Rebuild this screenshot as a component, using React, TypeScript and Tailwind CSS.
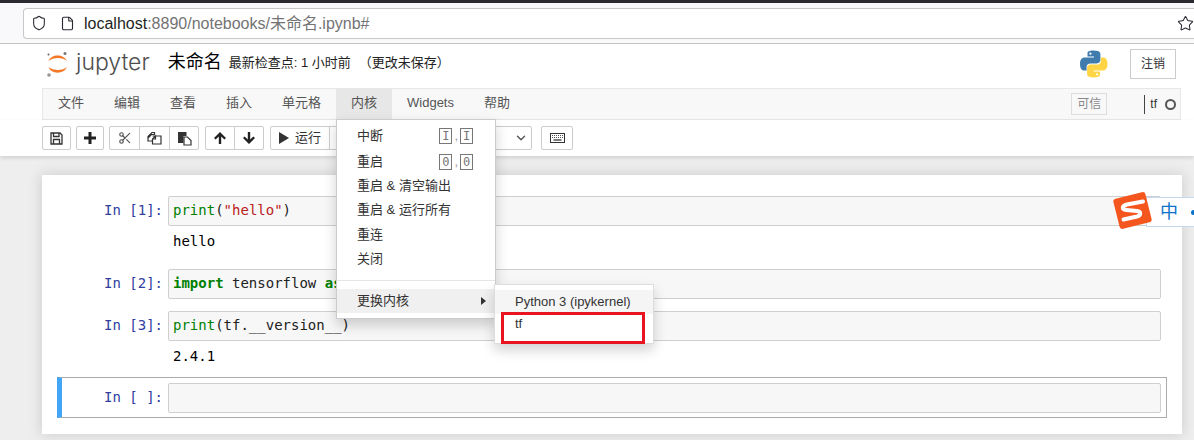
import React from 'react';
import { ChevronDown, Scissors, Shield, File, Star } from 'lucide-react';

const SANS = "font-['Liberation_Sans','Noto_Sans_CJK_SC',sans-serif]";
const MONO = "font-['DejaVu_Sans_Mono',monospace]";

const MENU_ITEMS = [
  { label: '文件', width: 'w-14' },
  { label: '编辑', width: 'w-14' },
  { label: '查看', width: 'w-14' },
  { label: '插入', width: 'w-14' },
  { label: '单元格', width: 'w-[69px]' },
  { label: '内核', width: 'w-[56px]', active: true },
  { label: 'Widgets', width: 'w-[77px]' },
  { label: '帮助', width: 'w-[56px]' },
];

const JupyterLogo = () => (
  <svg width="24" height="30" viewBox="0 0 24 30" className="shrink-0">
    <path d="M2.5 12 C5 4.5 18 4.5 21 12 C17 8 7 8 2.5 12Z" fill="#f37726" />
    <path d="M2.5 18 C5 25.5 18 25.5 21 18 C17 22 7 22 2.5 18Z" fill="#f37726" />
    <circle cx="19" cy="4.5" r="1.5" fill="#767677" />
    <circle cx="3" cy="26" r="1.8" fill="#989798" />
    <circle cx="2.5" cy="5.5" r="1" fill="#616262" />
  </svg>
);

const PythonLogo = () => (
  <svg width="30" height="30" viewBox="0 0 30 30">
    <path d="M14.5 1.5C8 1.5 8.5 4.2 8.5 4.2V7.5H15V8.6H5.5C5.5 8.6 1 8.2 1 15C1 21.8 5 21.4 5 21.4H7.6V18.2C7.6 18.2 7.4 14.4 11.4 14.4H17.6C17.6 14.4 21.4 14.5 21.4 10.8V5C21.4 5 22 1.5 14.5 1.5Z" fill="#3f7cad" />
    <circle cx="11.4" cy="4.7" r="1.1" fill="#fff" />
    <path d="M15 28.5C21.5 28.5 21 25.8 21 25.8V22.5H14.5V21.4H24C24 21.4 28.5 21.8 28.5 15C28.5 8.2 24.5 8.6 24.5 8.6H21.9V11.8C21.9 11.8 22.1 15.6 18.1 15.6H11.9C11.9 15.6 8.1 15.5 8.1 19.2V25C8.1 25 7.5 28.5 15 28.5Z" fill="#ffd545" />
    <circle cx="18.1" cy="25.3" r="1.1" fill="#fff" />
  </svg>
);

const SogouLogo = () => (
  <svg width="42" height="40" viewBox="0 0 42 40">
    <rect x="4" y="4" width="33" height="31" rx="3" transform="rotate(-14 20.5 19.5)" fill="#f4561d" />
    <path d="M31 10.5L15 13.5C9.5 15 9.5 18.5 14.5 19L25 20C29.5 20.5 29 24.5 25 25.5L11.5 28.5" fill="none" stroke="#fff" strokeWidth="4" strokeLinecap="round" />
  </svg>
);

const SaveIcon = () => (
  <svg width="13" height="13" viewBox="0 0 13 13" fill="none" stroke="#333" strokeWidth="1.3">
    <path d="M1 1H10L12 3V12H1Z" />
    <path d="M3.5 1V4.5H9V1M3.5 12V7.5H9.5V12" />
  </svg>
);

const PlusIcon = () => (
  <svg width="12" height="12" viewBox="0 0 12 12">
    <path d="M4.5 0H7.5V4.5H12V7.5H7.5V12H4.5V7.5H0V4.5H4.5Z" fill="#222" />
  </svg>
);

const CopyIcon = () => (
  <svg width="15" height="14" viewBox="0 0 15 14" fill="none" stroke="#333" strokeWidth="1.2">
    <path d="M1 7L4.5 3.5H7.5V1.5L5 1.5L1 5.5V10H5" />
    <path d="M5.5 5H9L14 5V13H5.5V8L8.5 5V8H5.5" />
  </svg>
);

const PasteIcon = () => (
  <svg width="15" height="15" viewBox="0 0 15 15">
    <path d="M1 1H9.5V5H6.5V12H1Z" fill="#333" />
    <path d="M7 6H10.5L14 9.5V14H7Z" fill="#fff" stroke="#333" strokeWidth="1.2" />
  </svg>
);

const ArrowIcon = ({ down = false }: { down?: boolean }) => (
  <svg width="14" height="14" viewBox="0 0 14 14" className={down ? 'rotate-180' : ''}>
    <path d="M7 1L13 7L11.4 8.6L8.2 5.5V13H5.8V5.5L2.6 8.6L1 7Z" fill="#222" />
  </svg>
);

const KeyboardIcon = () => (
  <svg width="15" height="10" viewBox="0 0 15 10">
    <rect x="0.5" y="0.5" width="14" height="9" fill="#fff" stroke="#333" />
    <path d="M2 2.5H13M2 4.5H13" stroke="#555" strokeWidth="1" strokeDasharray="1 1" />
    <path d="M3.5 7H11.5" stroke="#333" strokeWidth="1.3" />
  </svg>
);

const ToolButton = ({ children, className = '' }: { children: React.ReactNode; className?: string }) => (
  <div className={`flex h-6 items-center border border-[#ccc] bg-white -ml-px first:ml-0 first:rounded-l-[2px] last:rounded-r-[2px] ${className}`}>
    {children}
  </div>
);

const KeyCap = ({ ch }: { ch: string }) => (
  <span className={`flex h-[16px] w-[13px] items-center justify-center border border-[#777] text-[12px] text-[#777] ${MONO}`}>{ch}</span>
);

const Cell = ({ prompt, children, output, selected = false }: { prompt: string; children?: React.ReactNode; output?: string; selected?: boolean }) => (
  <div className={selected ? 'ml-[15px] mr-[15px] flex h-[41px] items-center border border-[#ababab] border-l-[5px] border-l-[#42a5f5]' : 'ml-[15px] mr-[15px] border-l-[5px] border-transparent'}>
    <div className="flex w-full">
      <div className={`w-[106px] shrink-0 pt-[6px] pr-[5px] text-right text-[14px] leading-[17px] text-[#303f9f] ${MONO}`}>{prompt}</div>
      <div className="min-w-0 flex-1">
        <div className={`h-[30px] rounded-[2px] border border-[#cfcfcf] bg-[#f7f7f7] px-[4px] text-[14px] leading-[27px] whitespace-pre text-[#212121] ${MONO} ${selected ? 'mr-[5px]' : 'mr-[6px]'}`}>{children}</div>
        {output && <div className={`h-[28px] pl-[5px] pt-[7px] text-[14px] leading-[17px] text-black ${MONO}`}>{output}</div>}
      </div>
    </div>
  </div>
);

const App = () => {
  return (
    <div className={`relative h-[440px] w-[1194px] overflow-hidden bg-[#eeeeee] ${SANS}`}>
      {/* browser chrome */}
      <div className="h-[3px] bg-[#2b2a33]" />
      <div className="flex h-[41px] items-center border-b border-[#c4c4c4] bg-[#f9f9fb] pl-[23px]">
        <div className="flex h-[31px] flex-1 items-center rounded-l-[4px] border border-r-0 border-[#c8c8c8] bg-white pl-[7px]">
          <Shield size={16} strokeWidth={1.6} className="text-[#2b2a33]" />
          <File size={15} strokeWidth={1.8} className="ml-[13px] text-[#2b2a33]" />
          <span className="ml-[9px] mt-[2px] text-[16px] text-[#1f1f23]">localhost<span className="text-[#737373]">:8890/notebooks/未命名.ipynb#</span></span>
          <Star size={17} strokeWidth={1.5} className="ml-auto text-[#2b2a33]" />
        </div>
      </div>

      {/* notebook header */}
      <div className="flex h-[44px] items-center bg-white pb-[4px] pl-[46px] pr-[18px]">
        <JupyterLogo />
        <span className="mb-[4px] ml-[6px] font-['Inter',sans-serif] text-[23px] leading-none font-light text-[#4e4e4e]">jupyter</span>
        <span className="mb-[4px] ml-[18px] text-[18px] text-black">未命名</span>
        <span className="mb-[2px] ml-[7px] text-[13px] text-[#222]">最新检查点: 1 小时前</span>
        <span className="mb-[2px] ml-[8px] text-[13px] text-[#222]">（更改未保存）</span>
        <div className="ml-auto"><PythonLogo /></div>
        <div className="ml-[21px] flex h-[30px] w-[46px] items-center justify-center border border-[#ccc] text-[12px] text-[#333]">注销</div>
      </div>

      {/* menu bar */}
      <div className="bg-white pl-[42px] pr-[13px]">
        <div className="flex h-[32px] border border-[#e7e7e7] bg-[#f8f8f8]">
          {MENU_ITEMS.map((item) => (
            <div key={item.label} className={`flex items-center justify-center pb-[2px] text-[13px] text-[#555] ${item.width} ${item.active ? 'bg-[#e7e7e7]' : ''}`}>
              {item.label}
            </div>
          ))}
          <div className="ml-auto mr-[4px] flex items-center">
            <div className="mr-[37px] flex h-[22px] w-[36px] items-center justify-center border border-[#ddd] text-[12px] text-[#888]">可信</div>
            <div className="h-[19px] border-l border-[#444]" />
            <span className="ml-[5px] text-[12px] text-[#333]">tf</span>
            <span className="ml-[8px] h-[11px] w-[11px] rounded-full border-2 border-[#555]" />
          </div>
        </div>
      </div>

      {/* toolbar */}
      <div className="flex h-[36px] items-start bg-white pl-[42px] pt-[6px] shadow-[0_2px_4px_rgba(0,0,0,0.12)]">
        <ToolButton className="w-[29px] justify-center rounded-[2px]"><SaveIcon /></ToolButton>
        <ToolButton className="ml-[5px] w-[28px] justify-center rounded-[2px]"><PlusIcon /></ToolButton>
        <div className="ml-[5px] flex">
          <ToolButton className="w-[31px] justify-center"><Scissors size={14} className="text-[#555]" /></ToolButton>
          <ToolButton className="w-[31px] justify-center"><CopyIcon /></ToolButton>
          <ToolButton className="w-[30px] justify-center"><PasteIcon /></ToolButton>
        </div>
        <div className="ml-[6px] flex">
          <ToolButton className="w-[30px] justify-center"><ArrowIcon /></ToolButton>
          <ToolButton className="w-[30px] justify-center"><ArrowIcon down /></ToolButton>
        </div>
        <div className="ml-[6px] flex">
          <ToolButton className="w-[60px] justify-center gap-[6px]">
            <span className="h-0 w-0 border-y-[6px] border-l-[10px] border-y-transparent border-l-[#333]" />
            <span className="text-[13px] text-[#333]">运行</span>
          </ToolButton>
          <ToolButton className="w-[203px] justify-end pr-[3px]">
            <ChevronDown size={14} strokeWidth={2.4} className="text-[#555]" />
          </ToolButton>
        </div>
        <ToolButton className="ml-[9px] w-[32px] justify-center rounded-[2px]"><KeyboardIcon /></ToolButton>
      </div>

      {/* notebook panel */}
      <div className="ml-[42px] mr-[12px] mt-[19px] h-[259px] bg-white pt-[21px] shadow-[0_0_12px_1px_rgba(87,87,87,0.2)]">
        <Cell prompt="In [1]:" output="hello">
          <span className="text-[#008000]">print</span>(<span className="text-[#ba2121]">&quot;hello&quot;</span>)
        </Cell>
        <div className="h-[15px]" />
        <Cell prompt="In [2]:">
          <span className="font-bold text-[#008000]">import</span> tensorflow <span className="font-bold text-[#008000]">as</span> tf
        </Cell>
        <div className="h-[12px]" />
        <Cell prompt="In [3]:" output="2.4.1">
          <span className="text-[#008000]">print</span>(tf.__version__)
        </Cell>
        <div className="h-[8px]" />
        <Cell prompt="In [ ]:" selected />
      </div>

      {/* kernel dropdown */}
      <div className="absolute left-[336px] top-[119px] h-[200px] w-[160px] border border-[#ccc] bg-white pt-[3px] pb-[4px] text-[13px] text-[#333] shadow-[0_6px_12px_rgba(0,0,0,0.18)]">
        <div className="flex h-[26px] items-center pl-[20px] pr-[22px]">
          <span>中断</span>
          <span className="ml-auto flex items-center gap-[2px]"><KeyCap ch="I" /><span className="text-[#999]">,</span><KeyCap ch="I" /></span>
        </div>
        <div className="flex h-[25px] items-center pl-[20px] pr-[22px]">
          <span>重启</span>
          <span className="ml-auto flex items-center gap-[2px]"><KeyCap ch="0" /><span className="text-[#999]">,</span><KeyCap ch="0" /></span>
        </div>
        <div className="flex h-[24px] items-center pl-[20px]">重启 &amp; 清空输出</div>
        <div className="flex h-[24px] items-center pl-[20px]">重启 &amp; 运行所有</div>
        <div className="flex h-[25px] items-center pl-[20px]">重连</div>
        <div className="flex h-[24px] items-center pl-[20px]">关闭</div>
        <div className="mt-[9px] mb-[8px] border-t border-[#e5e5e5]" />
        <div className="flex h-[24px] items-center bg-[#f0f0f0] pl-[20px] pr-[9px]">
          <span>更换内核</span>
          <span className="ml-auto h-0 w-0 border-y-[4px] border-l-[5px] border-y-transparent border-l-[#333]" />
        </div>
      </div>

      {/* kernel submenu */}
      <div className="absolute left-[494px] top-[284px] h-[60px] w-[160px] border border-[#ddd] bg-white pt-[5px] text-[13px] text-[#333] shadow-[0_6px_12px_rgba(0,0,0,0.18)]">
        <div className="flex h-[24px] items-center bg-[#f5f5f5] pl-[20px]">Python 3 (ipykernel)</div>
        <div className="flex h-[20px] items-center pl-[20px]">tf</div>
      </div>
      <div className="absolute left-[501px] top-[312px] h-[32px] w-[144px] border-[3px] border-[#e8141f]" />

      {/* input method badge */}
      <div className="absolute left-[1146px] top-[197px] flex h-[30px] w-[48px] items-center border border-r-0 border-[#c5d9ee] bg-white pl-[13px]">
        <span className="text-[18px] text-[#0a72c9]">中</span>
        <span className="ml-auto h-[5px] w-[3px] rounded-l-full bg-[#0a72c9]" />
      </div>
      <div className="absolute left-[1112px] top-[191px]"><SogouLogo /></div>
    </div>
  );
};

export default App;
